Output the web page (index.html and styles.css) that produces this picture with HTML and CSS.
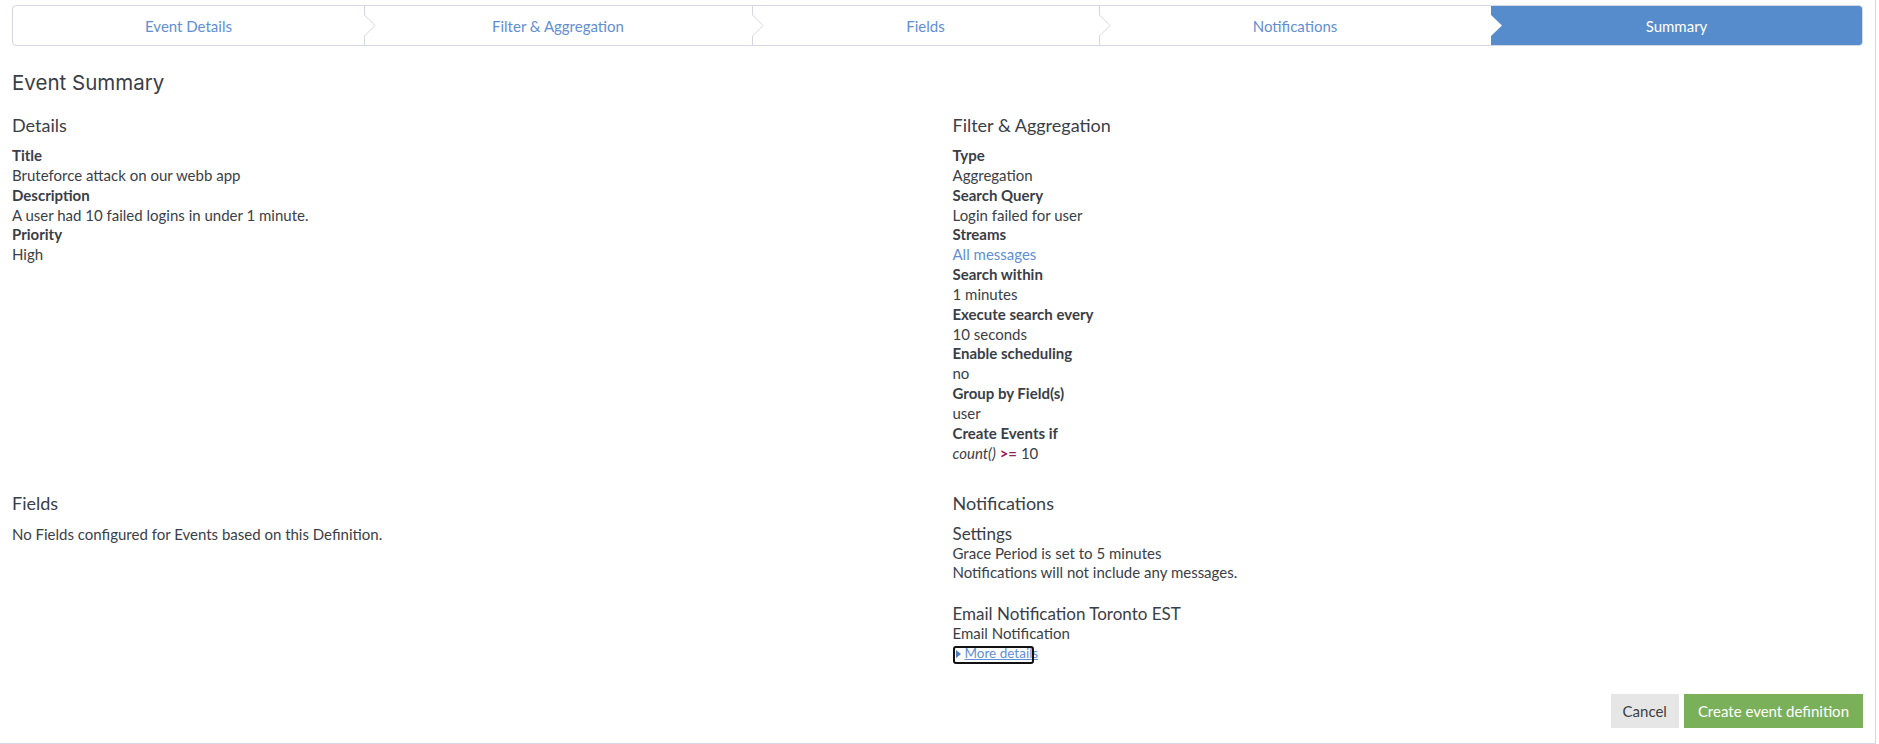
FILE: index.html
```html
<!DOCTYPE html>
<html lang="en">
<head>
<meta charset="utf-8">
<title>Event Summary</title>
<link rel="stylesheet" href="styles.css">
</head>
<body>
<div class="page">
  <nav class="steps">
    <div class="step">Event Details</div>
    <div class="step"><svg class="chev" width="12" height="39" viewBox="0 0 12 39"><path d="M0.5 0 V9 L11 19.5 L0.5 30 V39" fill="none" stroke="#d5d7e3" stroke-width="1"/></svg>Filter &amp; Aggregation</div>
    <div class="step"><svg class="chev" width="12" height="39" viewBox="0 0 12 39"><path d="M0.5 0 V9 L11 19.5 L0.5 30 V39" fill="none" stroke="#d5d7e3" stroke-width="1"/></svg>Fields</div>
    <div class="step"><svg class="chev" width="12" height="39" viewBox="0 0 12 39"><path d="M0.5 0 V9 L11 19.5 L0.5 30 V39" fill="none" stroke="#d5d7e3" stroke-width="1"/></svg>Notifications</div>
    <div class="step active"><svg class="chev" width="12" height="39" viewBox="0 0 12 39"><polygon points="0,9 11,19.5 0,30" fill="#ffffff"/></svg>Summary</div>
  </nav>

  <h2 class="title">Event Summary</h2>

  <div class="row">
    <section class="col">
      <h3>Details</h3>
      <dl>
        <dt>Title</dt>
        <dd>Bruteforce attack on our webb app</dd>
        <dt>Description</dt>
        <dd>A user had 10 failed logins in under 1 minute.</dd>
        <dt>Priority</dt>
        <dd>High</dd>
      </dl>
    </section>
    <section class="col">
      <h3>Filter &amp; Aggregation</h3>
      <dl>
        <dt>Type</dt>
        <dd>Aggregation</dd>
        <dt>Search Query</dt>
        <dd>Login failed for user</dd>
        <dt>Streams</dt>
        <dd><a class="link" href="#">All messages</a></dd>
        <dt>Search within</dt>
        <dd>1 minutes</dd>
        <dt>Execute search every</dt>
        <dd>10 seconds</dd>
        <dt>Enable scheduling</dt>
        <dd>no</dd>
        <dt>Group by Field(s)</dt>
        <dd>user</dd>
        <dt>Create Events if</dt>
        <dd><em>count()</em> <b class="op">&gt;=</b> 10</dd>
      </dl>
    </section>
  </div>

  <div class="row second">
    <section class="col">
      <h3>Fields</h3>
      <p class="text">No Fields configured for Events based on this Definition.</p>
    </section>
    <section class="col">
      <h3>Notifications</h3>
      <h4>Settings</h4>
      <p class="text tight">Grace Period is set to 5 minutes</p>
      <p class="text tight">Notifications will not include any messages.</p>
      <h4 class="spaced">Email Notification Toronto EST</h4>
      <p class="text tight">Email Notification</p>
      <p class="text tight"><span class="more"><span class="caret"></span><a class="link under" href="#">More details</a></span></p>
    </section>
  </div>

  <div class="actions">
    <button class="btn cancel" type="button">Cancel</button>
    <button class="btn primary" type="button">Create event definition</button>
  </div>
</div>
</body>
</html>
```

FILE: styles.css
```css
* { box-sizing: border-box; }

html, body {
  margin: 0;
  padding: 0;
  background: #ffffff;
}

body {
  font-family: "Lato", "Liberation Sans", sans-serif;
  font-size: 15px;
  line-height: 20px;
  color: #3a3e47;
}

.page {
  width: 1876px;
  height: 744px;
  padding: 5px 12px 15px 12px;
  border-right: 1px solid #d5d7e3;
  border-bottom: 1px solid #d5d7e3;
  display: flex;
  flex-direction: column;
}

/* Wizard steps */
.steps {
  display: grid;
  grid-template-columns: 351px 388px 347px 392px 1fr;
  height: 41px;
  border: 1px solid #d5d7e3;
  border-radius: 4px;
  overflow: hidden;
}

.step {
  position: relative;
  display: flex;
  align-items: center;
  justify-content: center;
  color: #628ed3;
  font-size: 15px;
}

.step .chev {
  position: absolute;
  left: 0;
  top: 0;
}

.step.active {
  background: #568bcc;
  color: #ffffff;
}

/* Headings */
.title {
  font-family: "Inter", "Lato", sans-serif;
  font-weight: 400;
  font-size: 20.5px;
  line-height: 24px;
  margin: 25px 0 19px 0;
  color: #3a3e47;
}

.row {
  display: grid;
  grid-template-columns: 1fr 1fr;
  column-gap: 30px;
  margin-bottom: 28px;
}

h3 {
  font-weight: 400;
  font-size: 18px;
  line-height: 22px;
  margin: 0 0 10px 0;
}

h4 {
  font-weight: 400;
  font-size: 17px;
  line-height: 20px;
  margin: 0;
}

h4.spaced {
  margin-top: 21px;
}

dl {
  margin: 0;
  line-height: 19.85px;
}

dt {
  font-weight: 700;
}

dd {
  margin: 0;
}

.text {
  margin: 0;
}

.text.tight {
  line-height: 19.5px;
}

.link {
  color: #5f8fd6;
  text-decoration: none;
}

.op {
  color: #96205a;
}

em {
  font-style: italic;
}

/* More details (focused summary) */
.more {
  position: relative;
  display: inline-flex;
  align-items: center;
  font-size: 13.5px;
  padding-left: 3px;
  white-space: nowrap;
}

.more::after {
  content: "";
  position: absolute;
  left: 0;
  top: 2px;
  width: 77px;
  height: 14px;
  border: 2px solid #111111;
  border-radius: 3px;
}

.caret {
  display: inline-block;
  width: 0;
  height: 0;
  border-left: 5px solid #4a7cc2;
  border-top: 4px solid transparent;
  border-bottom: 4px solid transparent;
  margin-right: 4px;
}

.under {
  text-decoration: underline;
}

/* Actions */
.actions {
  margin-top: auto;
  display: flex;
  justify-content: flex-end;
  gap: 5px;
}

.btn {
  height: 34px;
  padding: 0 12px;
  border: none;
  border-radius: 0;
  font-family: "Lato", "Liberation Sans", sans-serif;
  font-size: 15px;
}

.btn.cancel {
  background: #e6e6e6;
  color: #3a3e47;
}

.btn.primary {
  background: #7bb05a;
  color: #ffffff;
  padding: 0 14px;
}
```
